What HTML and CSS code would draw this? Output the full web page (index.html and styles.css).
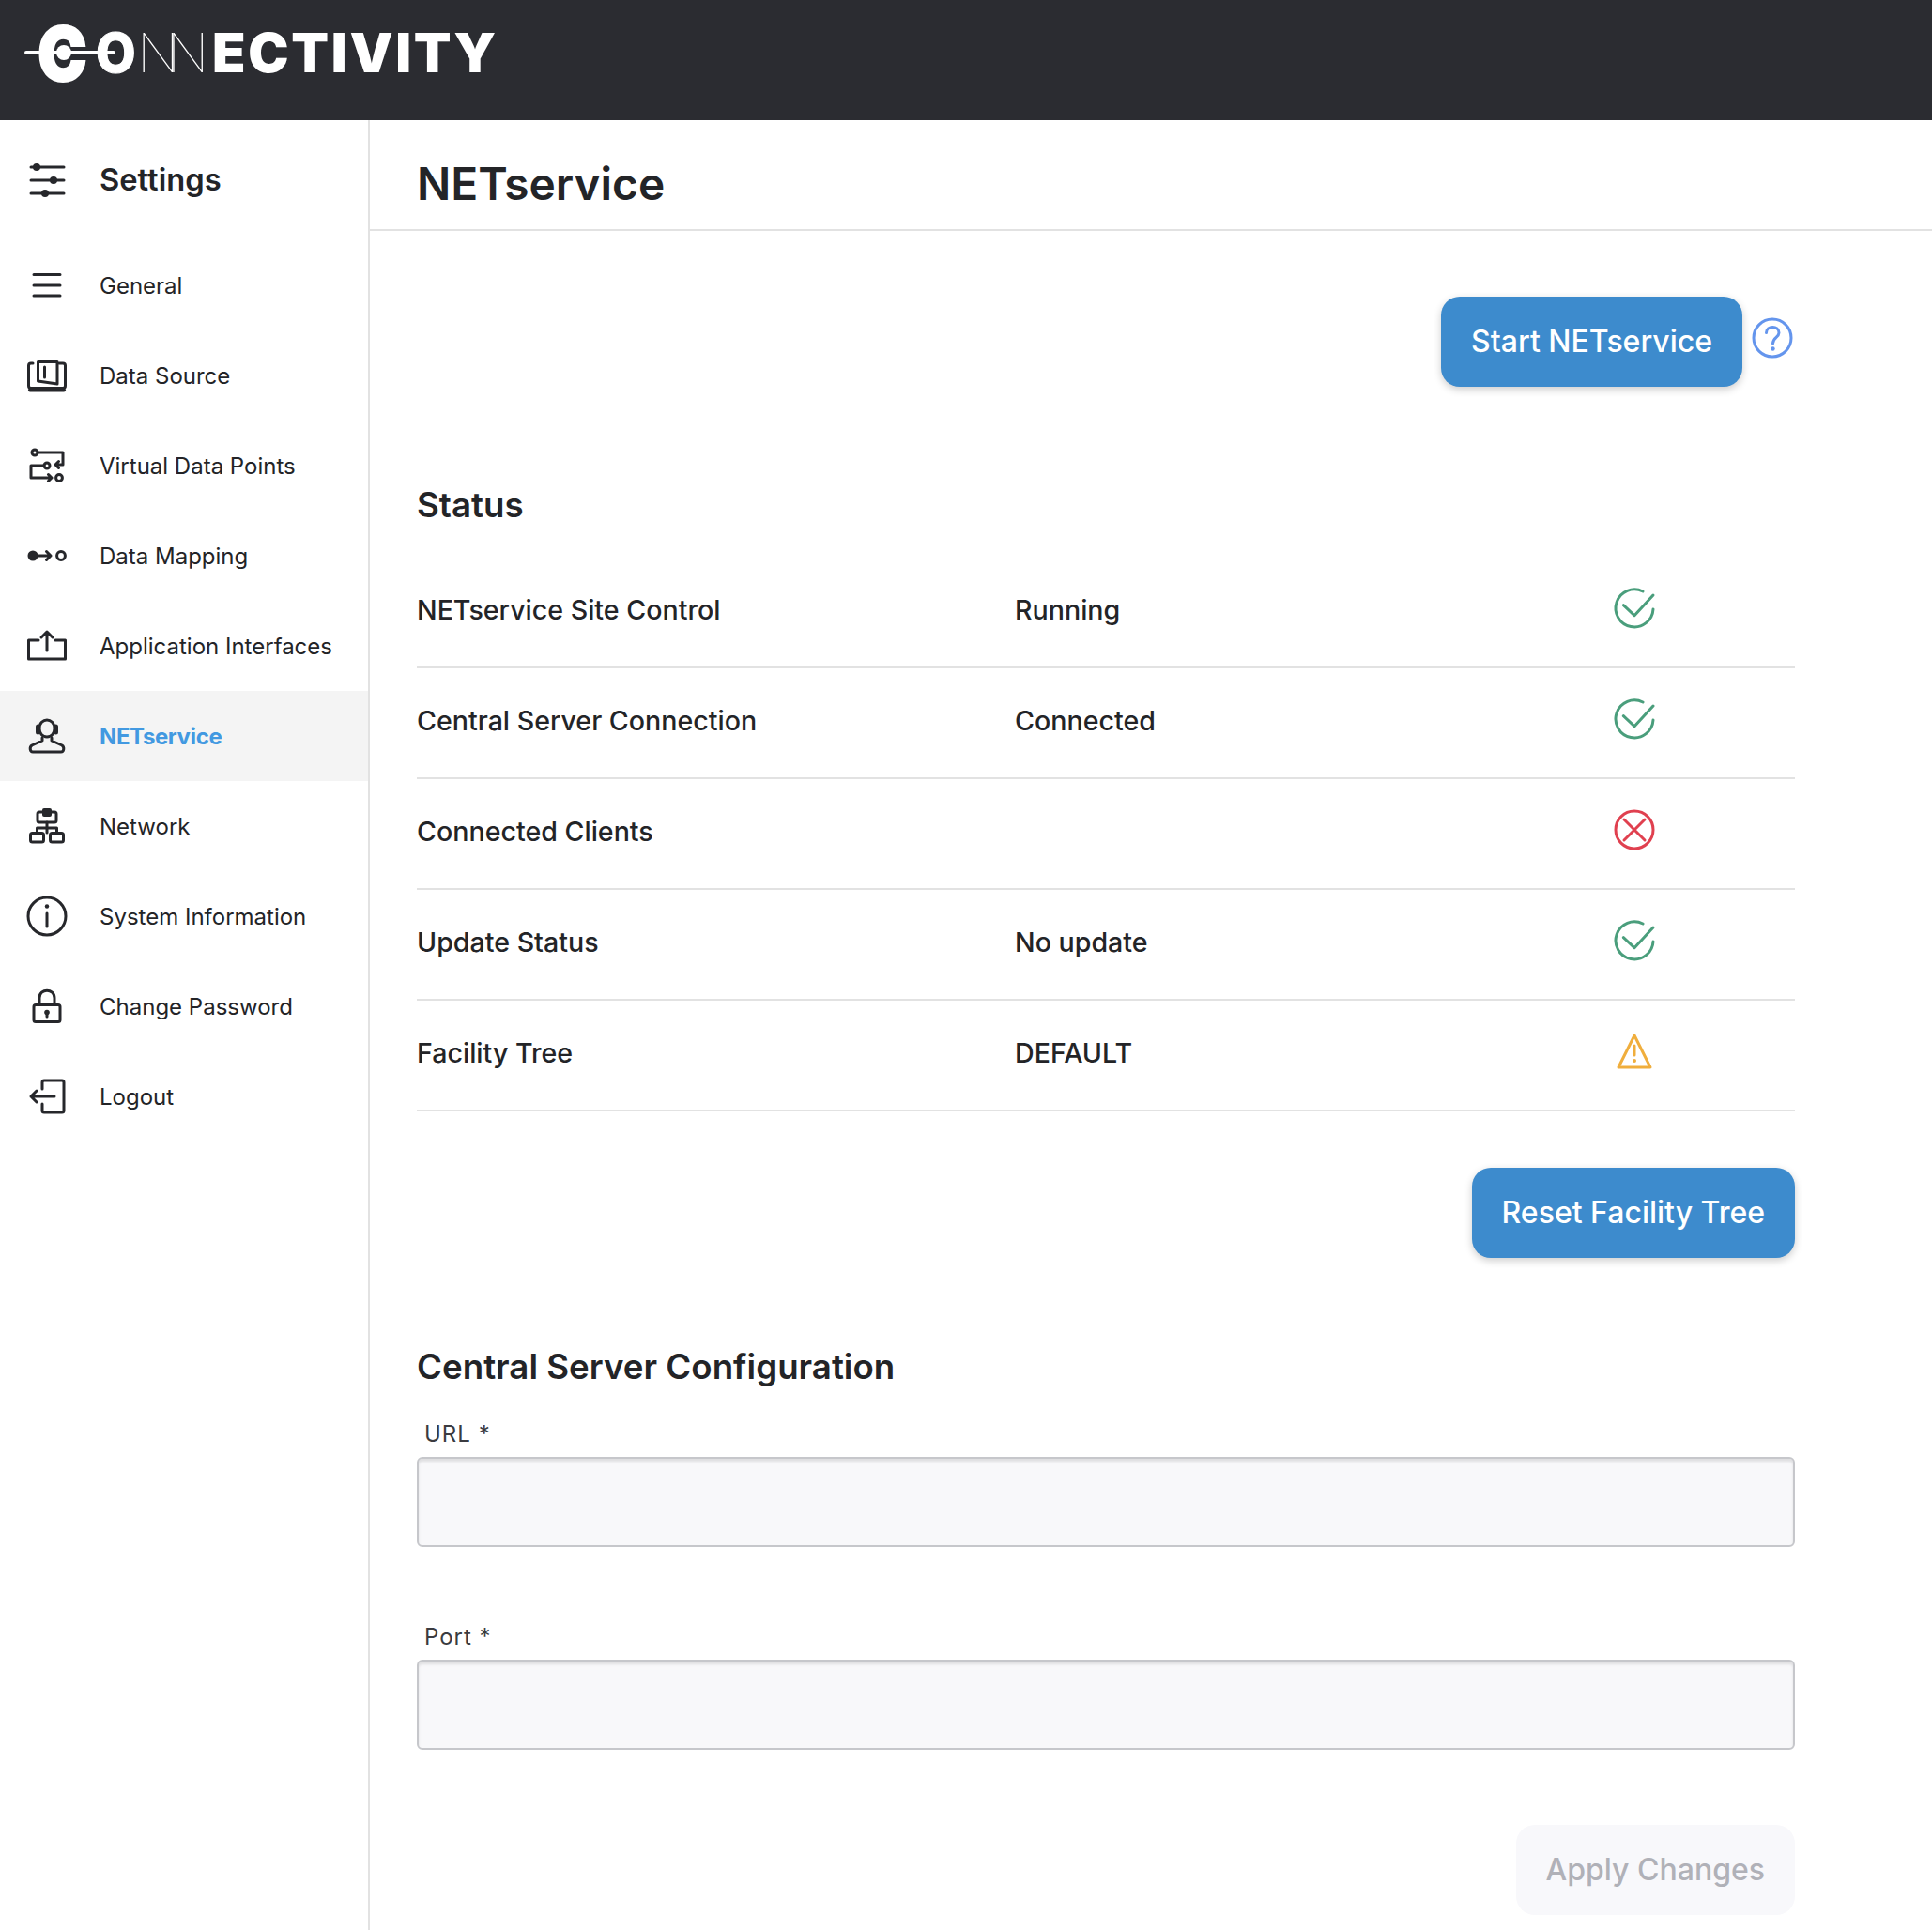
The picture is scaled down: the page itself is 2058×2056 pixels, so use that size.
FILE: index.html
```html
<!DOCTYPE html>
<html lang="en">
<head>
    <meta charset="UTF-8">
    <meta name="viewport" content="width=device-width, initial-scale=1.0">
    <title>NETservice - Connectivity</title>
    <link rel="stylesheet" href="styles.css">
</head>
<body>
    <header class="topbar">
        <div class="logo">
            <span class="logo-c">C</span><span class="logo-o">O</span><span class="logo-n">NN</span><span class="logo-rest">ECTIVITY</span>
            <span class="logo-line"></span>
            <span class="logo-dot"></span>
        </div>
    </header>

    <div class="page">
        <aside class="sidebar">
            <div class="side-title">
                <svg class="side-icon" viewBox="0 0 48 48" fill="none" stroke="#26272b" stroke-width="3" stroke-linecap="round">
                    <path d="M7 11H42M7 25H42M7 39H42"/>
                    <circle cx="13" cy="11" r="4" fill="#26272b" stroke="none"/>
                    <circle cx="31" cy="25" r="4" fill="#26272b" stroke="none"/>
                    <circle cx="22" cy="39" r="4" fill="#26272b" stroke="none"/>
                </svg>
                <span>Settings</span>
            </div>
            <nav class="side-nav">
                <a href="#" class="side-item">
                    <svg class="side-icon" viewBox="0 0 48 48" fill="none" stroke="#26272b" stroke-width="3" stroke-linecap="round">
                        <path d="M10 12.5H38M10 24H38M10 35H38"/>
                    </svg>
                    General
                </a>
                <a href="#" class="side-item">
                    <svg class="side-icon" viewBox="0 0 48 48" fill="none" stroke="#26272b" stroke-width="3" stroke-linecap="round" stroke-linejoin="round">
                        <path d="M9 11H7Q4.500 11 4.500 13.500V35Q4.500 37.500 7 37.500H41Q43.500 37.500 43.500 35V13.500Q43.500 11 41 11H37"/>
                        <path d="M6 39.500H42" stroke-width="4"/>
                        <path d="M14.500 9.500H35V33L14.500 30Z"/>
                        <path d="M21.500 15V26"/>
                    </svg>
                    Data Source
                </a>
                <a href="#" class="side-item">
                    <svg class="side-icon" viewBox="0 0 48 48" fill="none" stroke="#26272b" stroke-width="3" stroke-linecap="round" stroke-linejoin="round">
                        <circle cx="11" cy="10" r="3"/>
                        <path d="M14 10H41V23H33M36.500 19.500L33 23L36.500 26.500"/>
                        <circle cx="24" cy="24" r="3"/>
                        <path d="M21 24H7V37H29M25.500 33.500L29 37L25.500 40.500"/>
                        <circle cx="37" cy="37" r="3.400"/>
                    </svg>
                    Virtual Data Points
                </a>
                <a href="#" class="side-item">
                    <svg class="side-icon" viewBox="0 0 48 48" fill="none" stroke="#26272b" stroke-width="3" stroke-linecap="round" stroke-linejoin="round">
                        <circle cx="9" cy="24" r="5.500" fill="#26272b" stroke="none"/>
                        <path d="M12 24H28M23.500 19.500L28 24L23.500 28.500"/>
                        <circle cx="39" cy="24" r="4.400"/>
                    </svg>
                    Data Mapping
                </a>
                <a href="#" class="side-item">
                    <svg class="side-icon" viewBox="0 0 48 48" fill="none" stroke="#26272b" stroke-width="3" stroke-linecap="round" stroke-linejoin="round">
                        <path d="M15 18H4.500V38H43.500V18H33"/>
                        <path d="M24 29V9M18 15L24 9L30 15"/>
                    </svg>
                    Application Interfaces
                </a>
                <a href="#" class="side-item active">
                    <svg class="side-icon" viewBox="0 0 48 48" fill="none" stroke="#26272b" stroke-width="3" stroke-linecap="round" stroke-linejoin="round">
                        <path d="M16 16C16 4 32 4 32 16C32 21 29 25 24 25C19 25 16 21 16 16Z"/>
                        <path d="M14.500 14V20M33.500 14V20" stroke-width="5"/>
                        <path d="M19 26V29L8 34C5 36 6 41 9 41H39C42 41 43 36 40 34L29 29V26"/>
                    </svg>
                    NETservice
                </a>
                <a href="#" class="side-item">
                    <svg class="side-icon" viewBox="0 0 48 48" fill="none" stroke="#26272b" stroke-width="3" stroke-linecap="round" stroke-linejoin="round">
                        <rect x="14" y="9" width="20" height="11" rx="2"/>
                        <rect x="19" y="5" width="10" height="9" rx="2" fill="#26272b" stroke="none"/>
                        <path d="M24 20V31M13.500 31V26H34.500V31"/>
                        <rect x="6.500" y="31.500" width="14" height="9.500" rx="2"/>
                        <rect x="27.500" y="31.500" width="14" height="9.500" rx="2"/>
                    </svg>
                    Network
                </a>
                <a href="#" class="side-item">
                    <svg class="side-icon" viewBox="0 0 48 48" fill="none" stroke="#26272b" stroke-width="3" stroke-linecap="round">
                        <circle cx="24" cy="24" r="20"/>
                        <path d="M24 21V35"/>
                        <circle cx="24" cy="13.500" r="2.200" fill="#26272b" stroke="none"/>
                    </svg>
                    System Information
                </a>
                <a href="#" class="side-item">
                    <svg class="side-icon" viewBox="0 0 48 48" fill="none" stroke="#26272b" stroke-width="3" stroke-linecap="round" stroke-linejoin="round">
                        <rect x="10" y="22.500" width="28" height="18" rx="2"/>
                        <path d="M16 22V15C16 4.500 32 4.500 32 15V22"/>
                        <circle cx="24" cy="30.500" r="2.800" fill="#26272b" stroke="none"/>
                        <path d="M24 31V35"/>
                    </svg>
                    Change Password
                </a>
                <a href="#" class="side-item">
                    <svg class="side-icon" viewBox="0 0 48 48" fill="none" stroke="#26272b" stroke-width="3" stroke-linecap="round" stroke-linejoin="round">
                        <path d="M19 16V9Q19 7 21 7H40Q42 7 42 9V39Q42 41 40 41H21Q19 41 19 39V32"/>
                        <path d="M32 24H7M13 18L7 24L13 30"/>
                    </svg>
                    Logout
                </a>
            </nav>
        </aside>

        <main class="main">
            <div class="title-bar">
                <h1>NETservice</h1>
            </div>

            <div class="content">
                <div class="start-row">
                    <button class="btn" type="button">Start NETservice</button>
                    <svg class="help-icon" viewBox="0 0 48 48" fill="none" stroke="#6495ed" stroke-width="3" stroke-linecap="round">
                        <circle cx="24" cy="24" r="20"/>
                        <path d="M17.500 18.500C17.500 10.500 31 10.500 31 18.500C31 23.500 24.500 23.500 24.500 30"/>
                        <circle cx="24.500" cy="35.500" r="2.200" fill="#6495ed" stroke="none"/>
                    </svg>
                </div>

                <h2 class="status-heading">Status</h2>
                <div class="status-list">
                    <div class="status-row">
                        <span>NETservice Site Control</span>
                        <span>Running</span>
                        <svg class="status-icon" viewBox="0 0 48 48" fill="none" stroke="#4a9e7c" stroke-width="3" stroke-linecap="round" stroke-linejoin="round">
                            <path d="M44 25A20 20 0 1 1 33 6"/>
                            <path d="M12.300 20.700L24 31.700L44 10"/>
                        </svg>
                    </div>
                    <div class="status-row">
                        <span>Central Server Connection</span>
                        <span>Connected</span>
                        <svg class="status-icon" viewBox="0 0 48 48" fill="none" stroke="#4a9e7c" stroke-width="3" stroke-linecap="round" stroke-linejoin="round">
                            <path d="M44 25A20 20 0 1 1 33 6"/>
                            <path d="M12.300 20.700L24 31.700L44 10"/>
                        </svg>
                    </div>
                    <div class="status-row">
                        <span>Connected Clients</span>
                        <span></span>
                        <svg class="status-icon" viewBox="0 0 48 48" fill="none" stroke="#e0404f" stroke-width="3" stroke-linecap="round">
                            <circle cx="24" cy="24" r="20"/>
                            <path d="M13 13L35 35M35 13L13 35"/>
                        </svg>
                    </div>
                    <div class="status-row">
                        <span>Update Status</span>
                        <span>No update</span>
                        <svg class="status-icon" viewBox="0 0 48 48" fill="none" stroke="#4a9e7c" stroke-width="3" stroke-linecap="round" stroke-linejoin="round">
                            <path d="M44 25A20 20 0 1 1 33 6"/>
                            <path d="M12.300 20.700L24 31.700L44 10"/>
                        </svg>
                    </div>
                    <div class="status-row">
                        <span>Facility Tree</span>
                        <span>DEFAULT</span>
                        <svg class="status-icon" viewBox="0 0 48 48" fill="none" stroke="#f0ae3c" stroke-width="3" stroke-linecap="round" stroke-linejoin="round">
                            <path d="M24 7L41 41H7Z"/>
                            <path d="M24 18V28"/>
                            <circle cx="24" cy="34" r="2" fill="#f0ae3c" stroke="none"/>
                        </svg>
                    </div>
                </div>

                <div class="action-row">
                    <button class="btn" type="button">Reset Facility Tree</button>
                </div>

                <h2 class="config-heading">Central Server Configuration</h2>
                <form class="config-form">
                    <label class="field-label" for="url">URL *</label>
                    <input class="field-input" id="url" type="text">
                    <label class="field-label" for="port">Port *</label>
                    <input class="field-input" id="port" type="text">
                    <div class="apply-row">
                        <button class="btn btn-disabled" type="button" disabled>Apply Changes</button>
                    </div>
                </form>
            </div>
        </main>
    </div>
</body>
</html>
```

FILE: styles.css
```css
/* General Reset */
* {
    margin: 0;
    padding: 0;
    box-sizing: border-box;
}

body {
    font-family: Inter, 'Noto Sans', sans-serif;
    background: #fff;
    color: #232427;
    min-height: 100vh;
}

/* Top bar and logo */
.topbar {
    height: 128px;
    background: #2b2c31;
    padding: 10px 0 0 40px;
}

.logo {
    position: relative;
    display: flex;
    align-items: baseline;
    height: 76px;
    color: white;
    line-height: 76px;
    font-family: Inter, sans-serif;
}

.logo-c {
    font-size: 80px;
    font-weight: 900;
    width: 62px;
    position: relative;
    top: 9px;
    transform: scaleX(0.88);
    transform-origin: left center;
    -webkit-text-stroke: 2px white;
}

.logo-o {
    font-size: 58px;
    font-weight: 800;
    width: 44px;
    transform: scaleX(0.95);
    transform-origin: left center;
    -webkit-text-stroke: 1px white;
}

.logo-n {
    font-size: 58px;
    font-weight: 100;
    letter-spacing: -13px;
    width: 80px;
}

.logo-rest {
    font-size: 58px;
    font-weight: 900;
    letter-spacing: 2.700px;
}

.logo-line {
    position: absolute;
    left: -14px;
    top: 44px;
    width: 97px;
    height: 4px;
    background: white;
    border-radius: 2px;
}

.logo-dot {
    position: absolute;
    left: 20px;
    top: 38px;
    width: 16px;
    height: 16px;
    background: white;
    border-radius: 50%;
}

/* Page layout */
.page {
    display: flex;
    min-height: 1928px;
}

.sidebar {
    width: 394px;
    flex-shrink: 0;
    border-right: 2px solid #e2e2e2;
}

.side-title {
    height: 128px;
    display: flex;
    align-items: center;
    gap: 32px;
    padding: 0 0 2px 26px;
    font-size: 32.700px;
    font-weight: 600;
}

.side-icon {
    width: 48px;
    height: 48px;
    flex-shrink: 0;
}

.side-item {
    height: 96px;
    display: flex;
    align-items: center;
    gap: 32px;
    padding-left: 26px;
    font-size: 24px;
    color: #232427;
    text-decoration: none;
}

.side-item.active {
    background: #f4f4f4;
    color: #4299e1;
    font-weight: 700;
    letter-spacing: -0.400px;
}

.main {
    flex: 1;
}

.title-bar {
    height: 118px;
    padding: 34px 0 0 50px;
    border-bottom: 2px solid #e2e2e2;
}

.title-bar h1 {
    font-size: 47.800px;
    line-height: 68px;
    font-weight: 600;
}

.content {
    padding: 70px 146px 16px 50px;
}

/* Buttons */
.btn {
    height: 96px;
    padding: 0 32px 2px;
    background: #3d8bcd;
    color: white;
    border: none;
    border-radius: 20px;
    font-family: inherit;
    font-size: 32px;
    font-weight: 450;
    box-shadow: 0 3px 8px rgba(0, 0, 0, 0.2);
    cursor: pointer;
}

.btn-disabled {
    background: #f8f8fb;
    color: #b0b1b8;
    box-shadow: none;
    cursor: default;
}

.start-row {
    display: flex;
    justify-content: flex-end;
    align-items: flex-start;
    gap: 8px;
}

.help-icon {
    width: 48px;
    height: 48px;
    margin-top: 20px;
}

/* Status */
.status-heading,
.config-heading {
    font-size: 36.700px;
    line-height: 46px;
    font-weight: 600;
}

.status-heading {
    margin-top: 103px;
    margin-bottom: 33px;
}

.status-row {
    height: 118px;
    display: grid;
    grid-template-columns: 637px 1fr 48px;
    align-items: center;
    padding: 0 147px 6px 0;
    border-bottom: 2px solid #e2e2e2;
    font-size: 28.600px;
    font-weight: 500;
}

.status-icon {
    width: 48px;
    height: 48px;
    margin-bottom: 2px;
}

.action-row,
.apply-row {
    display: flex;
    justify-content: flex-end;
}

.action-row {
    margin-top: 60px;
}

.config-heading {
    margin-top: 93px;
}

/* Form */
.config-form {
    margin-top: 31px;
}

.field-label {
    display: block;
    height: 36px;
    line-height: 36px;
    padding-left: 8px;
    margin-bottom: 6px;
    font-size: 24px;
    letter-spacing: 1px;
    color: #3a3b40;
}

.field-input {
    display: block;
    width: 100%;
    height: 96px;
    margin-bottom: 78px;
    background: #f8f8fa;
    border: 2px solid #c6c7cb;
    border-radius: 6px;
    box-shadow: inset 0 3px 3px rgba(0, 0, 0, 0.1);
}

.apply-row {
    margin-top: 80px;
}
```
